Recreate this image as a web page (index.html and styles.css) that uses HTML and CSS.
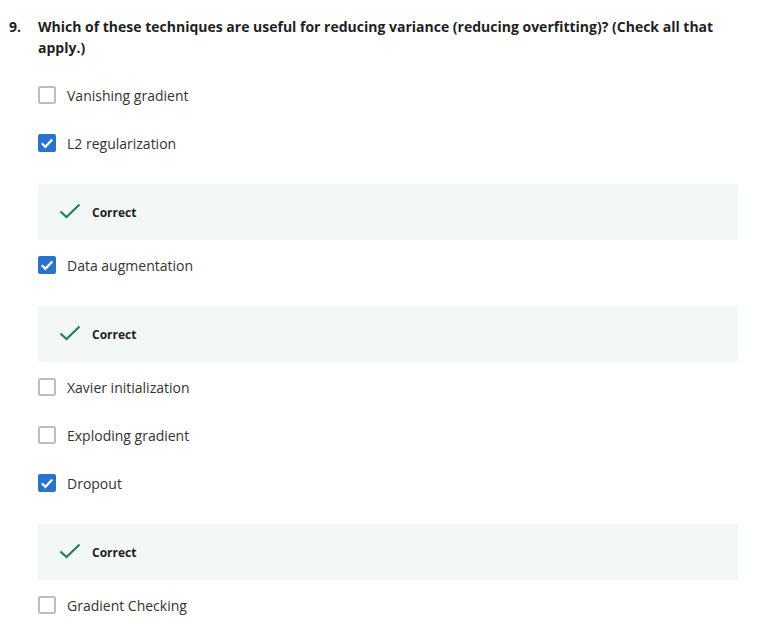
FILE: index.html
```html
<!DOCTYPE html>
<html>
<head>
<meta charset="utf-8">
<link rel="stylesheet" href="styles.css">
</head>
<body>
<div class="question">
  <div class="qhead">
    <span class="qnum">9.</span>
    <span class="qtext">Which of these techniques are useful for reducing variance (reducing overfitting)? (Check all that apply.)</span>
  </div>
  <div class="options">
    <div class="opt"><span class="box"></span><span class="label">Vanishing gradient</span></div>
    <div class="opt"><span class="box checked"><svg viewBox="0 0 18 18" width="18" height="18"><path d="M3.8 9.2 L7.4 12.8 L14.3 5.4" fill="none" stroke="#fff" stroke-width="2.2"/></svg></span><span class="label">L2 regularization</span></div>
    <div class="feedback"><svg class="tick" viewBox="0 0 22 16" width="22" height="16"><path d="M1.5 8.5 L7.5 14 L20.5 1.5" fill="none" stroke="#1f8354" stroke-width="2.2"/></svg><span>Correct</span></div>
    <div class="opt"><span class="box checked"><svg viewBox="0 0 18 18" width="18" height="18"><path d="M3.8 9.2 L7.4 12.8 L14.3 5.4" fill="none" stroke="#fff" stroke-width="2.2"/></svg></span><span class="label">Data augmentation</span></div>
    <div class="feedback"><svg class="tick" viewBox="0 0 22 16" width="22" height="16"><path d="M1.5 8.5 L7.5 14 L20.5 1.5" fill="none" stroke="#1f8354" stroke-width="2.2"/></svg><span>Correct</span></div>
    <div class="opt"><span class="box"></span><span class="label">Xavier initialization</span></div>
    <div class="opt"><span class="box"></span><span class="label">Exploding gradient</span></div>
    <div class="opt"><span class="box checked"><svg viewBox="0 0 18 18" width="18" height="18"><path d="M3.8 9.2 L7.4 12.8 L14.3 5.4" fill="none" stroke="#fff" stroke-width="2.2"/></svg></span><span class="label">Dropout</span></div>
    <div class="feedback"><svg class="tick" viewBox="0 0 22 16" width="22" height="16"><path d="M1.5 8.5 L7.5 14 L20.5 1.5" fill="none" stroke="#1f8354" stroke-width="2.2"/></svg><span>Correct</span></div>
    <div class="opt"><span class="box"></span><span class="label">Gradient Checking</span></div>
  </div>
</div>
</body>
</html>
```
FILE: styles.css
```css
html, body {
  margin: 0;
  padding: 0;
  background: #fff;
}
body {
  font-family: "Open Sans", "Liberation Sans", sans-serif;
  color: #1f1f1f;
}
.question {
  padding: 16px 24px 0 9px;
}
.qhead {
  display: flex;
  font-size: 14px;
  font-weight: 700;
  line-height: 21px;
  color: #1f1f1f;
}
.qnum {
  width: 29px;
  flex: none;
}
.qtext {
  width: 690px;
}
.options {
  margin-left: 29px;
  margin-top: 25px;
  width: 700px;
}
.opt {
  display: flex;
  align-items: center;
  height: 24px;
  margin-bottom: 24px;
  font-size: 14px;
  color: #333;
}
.box {
  width: 18px;
  height: 18px;
  box-sizing: border-box;
  border: 2px solid #bdbdbd;
  border-radius: 2px;
  margin-right: 11px;
  flex: none;
  display: flex;
}
.box.checked {
  background: #2a73cc;
  border: none;
}
.feedback {
  margin-top: 29px;
  margin-bottom: 13px;
  height: 56px;
  background: #f3f8f6;
  display: flex;
  align-items: center;
  padding-left: 21px;
  font-size: 12px;
  font-weight: 700;
  color: #1f1f1f;
}
.tick {
  margin-right: 11px;
  margin-top: -2px;
}
```
